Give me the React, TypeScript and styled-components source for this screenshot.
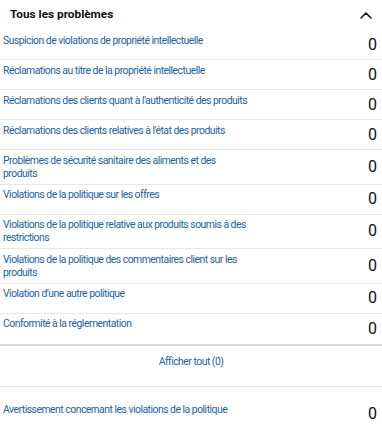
import React from "react";
import styled, { createGlobalStyle } from "styled-components";

const GlobalStyle = createGlobalStyle`
  body {
    margin: 0;
    background: #ffffff;
    font-family: Roboto, "Liberation Sans", Arial, sans-serif;
    color: #0f1111;
  }
`;

interface Issue {
  label: string;
  count: number;
}

const issues: Issue[] = [
  { label: "Suspicion de violations de propriété intellectuelle", count: 0 },
  { label: "Réclamations au titre de la propriété intellectuelle", count: 0 },
  { label: "Réclamations des clients quant à l'authenticité des produits", count: 0 },
  { label: "Réclamations des clients relatives à l'état des produits", count: 0 },
  { label: "Problèmes de sécurité sanitaire des aliments et des produits", count: 0 },
  { label: "Violations de la politique sur les offres", count: 0 },
  { label: "Violations de la politique relative aux produits soumis à des restrictions", count: 0 },
  { label: "Violations de la politique des commentaires client sur les produits", count: 0 },
  { label: "Violation d’une autre politique", count: 0 },
  { label: "Conformité à la réglementation", count: 0 },
];

function Issues() {
  return (
    <Panel>
      <Header>
        <Title>Tous les problèmes</Title>
        <Chevron width="12" height="8" viewBox="0 0 12 8">
          <polyline points="1,7 6,2 11,7" />
        </Chevron>
      </Header>
      <List>
        {issues.map((issue) => (
          <Row key={issue.label}>
            <Label href="#">{issue.label}</Label>
            <Count>{issue.count}</Count>
          </Row>
        ))}
      </List>
      <ViewAll>
        <Label href="#">Afficher tout (0)</Label>
      </ViewAll>
      <WarningRow>
        <Label href="#">Avertissement concernant les violations de la politique</Label>
        <Count>0</Count>
      </WarningRow>
    </Panel>
  );
}

export default function App() {
  return (
    <>
      <GlobalStyle />
      <Issues />
    </>
  );
}

const Panel = styled.div`
  width: 382px;
  display: flex;
  flex-direction: column;
`;

const Header = styled.div`
  display: flex;
  align-items: center;
  justify-content: space-between;
  height: 30px;
  box-sizing: border-box;
  padding: 0 10px 2px 10px;
`;

const Title = styled.h2`
  margin: 0;
  font-size: 11.8px;
  font-weight: 700;
  line-height: 14px;
  color: #0f1111;
`;

const Chevron = styled.svg`
  fill: none;
  stroke: #0f1111;
  stroke-width: 1.5;
  stroke-linecap: round;
  stroke-linejoin: round;
  margin-top: 1px;
`;

const List = styled.div`
  display: flex;
  flex-direction: column;
`;

const Row = styled.div`
  display: flex;
  align-items: center;
  justify-content: space-between;
  min-height: 30px;
  box-sizing: border-box;
  padding: 0 5px 0 3px;
  border-bottom: 1px solid #e7e7e7;

  &:last-child {
    border-bottom: none;
  }
`;

const Label = styled.a`
  align-self: flex-start;
  max-width: 246px;
  padding: 3.5px 0;
  font-size: 10.4px;
  letter-spacing: -0.5px;
  line-height: 13.3px;
  color: #2162a1;
  text-decoration: none;
`;

const Count = styled.span`
  font-size: 16px;
  line-height: 20px;
  color: #0f1111;
`;

const ViewAll = styled.div`
  display: flex;
  justify-content: center;
  height: 43px;
  box-sizing: border-box;
  padding-top: 6px;
  border-top: 2px solid #dadada;
  border-bottom: 1px solid #e7e7e7;
`;

const WarningRow = styled.div`
  display: flex;
  align-items: flex-start;
  justify-content: space-between;
  padding: 13px 5px 0 3px;

  ${Count} {
    margin-top: 4px;
  }
`;
